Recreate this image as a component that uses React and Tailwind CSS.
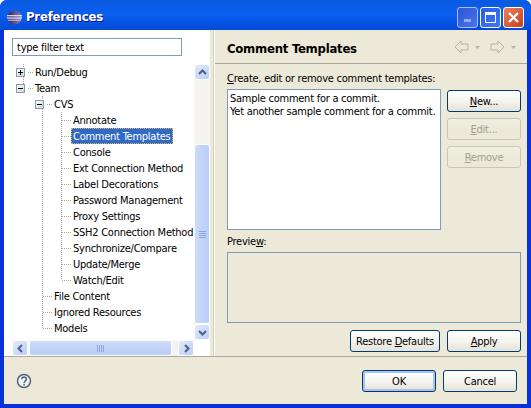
import React from "react";

function Btn({ children, disabled, def, className = "" }) {
  return (
    <button
      className={
        "h-[22px] whitespace-nowrap rounded-[3px] border text-[11px] leading-none tracking-[-0.25px] bg-gradient-to-b " +
        (disabled
          ? "border-[#c9c7ba] text-[#a1a192] from-[#f0eee2] via-[#ece9d8] to-[#ece9d8] "
          : "border-[#003c74] text-black from-white via-[#f5f4ee] to-[#e6e3d6] ") +
        (def ? "shadow-[inset_0_0_0_2px_#a9c2ee] " : "") +
        className
      }
    >
      {children}
    </button>
  );
}

function Row({ pl, children, selected, toggle }) {
  return (
    <div className="h-4 flex items-center relative whitespace-nowrap" style={{ paddingLeft: pl }}>
      {toggle && (
        <span
          className="absolute w-[9px] h-[9px] border border-[#7b9ebd] bg-gradient-to-br from-white to-[#d6d2c2] flex items-center justify-center"
          style={{ left: pl - 19 }}
        >
          <span className="block w-[5px] h-px bg-black" />
          {toggle === "+" && <span className="absolute block w-px h-[5px] bg-black" />}
        </span>
      )}
      {selected ? (
        <span className="-ml-[2px] px-px h-4 leading-[16px] bg-[#316ac5] text-white border border-dotted border-[#e6b450]">{children}</span>
      ) : (
        <span className="pt-[3px]">{children}</span>
      )}
    </div>
  );
}

function ScrollBtn({ d, className = "" }) {
  return (
    <div className={"rounded-[3px] border border-white bg-gradient-to-br from-[#e3ebfd] to-[#b9cdf7] flex items-center justify-center shrink-0 " + className}>
      <svg width="9" height="9" viewBox="0 0 9 9" fill="none">
        <path d={d} stroke="#4d6185" strokeWidth="2" />
      </svg>
    </div>
  );
}

function TreeLines() {
  const c = "#a9a793";
  const h = (x1, x2, y) => <line key={`h${x1}${y}`} x1={x1} x2={x2} y1={y + 0.5} y2={y + 0.5} stroke={c} strokeDasharray="1 1" />;
  const v = (x, y1, y2) => <line key={`v${x}${y1}`} x1={x + 0.5} x2={x + 0.5} y1={y1} y2={y2} stroke={c} strokeDasharray="1 1" />;
  const ys = [120, 136, 152, 168, 184, 200, 216, 232, 248, 264, 280];
  return (
    <svg className="absolute left-0 top-0 pointer-events-none" width="200" height="345" style={{ marginLeft: -4, marginTop: -30 }}>
      {v(23, 64, 68)}
      {v(23, 77, 84)}
      {h(28, 33, 72)}
      {h(28, 33, 88)}
      {v(42, 96, 100)}
      {h(47, 52, 104)}
      {v(42, 109, 328)}
      {v(61, 112, 280)}
      {ys.map((y) => h(62, 71, y))}
      {[296, 312, 328].map((y) => h(43, 52, y))}
    </svg>
  );
}

export default function App() {
  return (
    <div
      className="w-[531px] h-[408px] flex flex-col bg-[#0832d8] rounded-t-[7px] overflow-hidden text-[11px] text-black tracking-[-0.25px]"
      style={{ fontFamily: "'DejaVu Sans Condensed', 'DejaVu Sans', sans-serif" }}
    >
      <div className="h-[30px] shrink-0 flex items-center pl-[7px] pr-[7px] pt-[4px] gap-[4px] bg-gradient-to-b from-[#0a5ae0] via-[#0a5ff0] to-[#0449d6]">
        <svg width="15" height="15" viewBox="0 0 16 16" className="shrink-0">
          <defs>
            <linearGradient id="ec" x1="0" x2="1" y1="0" y2="0">
              <stop offset="0" stopColor="#2c2255" />
              <stop offset="1" stopColor="#8a7fc0" />
            </linearGradient>
          </defs>
          <circle cx="8" cy="8" r="7.500" fill="url(#ec)" />
          <rect x="0" y="5.500" width="16" height="1.200" fill="#f3eef8" />
          <rect x="0" y="8" width="16" height="1.200" fill="#f3eef8" />
          <rect x="1" y="10.400" width="14" height="1" fill="#d8d2ea" />
        </svg>
        <span className="flex-1 text-white font-bold text-[13px] tracking-[-0.2px] [text-shadow:1px_1px_#0f1089]">
          Preferences
        </span>
        <div className="flex gap-[2px]">
          <div className="w-[21px] h-[21px] rounded-[3px] border border-[#a8bdf0] bg-gradient-to-br from-[#2a56d8] to-[#4a74e8] flex items-end justify-center pb-[5px]">
            <span className="block w-[7px] h-[3px] bg-[#8fa8ee]" />
          </div>
          <div className="w-[21px] h-[21px] rounded-[3px] border border-white bg-gradient-to-br from-[#2a5ee8] to-[#3d78f0] flex items-center justify-center">
            <span className="block w-[11px] h-[11px] border border-white border-t-[3px]" />
          </div>
          <div className="w-[21px] h-[21px] rounded-[3px] border border-white bg-gradient-to-br from-[#e8835f] to-[#c63c14] flex items-center justify-center">
            <svg width="13" height="13" viewBox="0 0 13 13">
              <path d="M2 2l9 9M11 2l-9 9" stroke="white" strokeWidth="2.200" />
            </svg>
          </div>
        </div>
      </div>

      <div className="flex-1 mx-1 mb-1 bg-[#ece9d8] flex flex-col min-h-0">
        <div className="h-[327px] flex shrink-0 border-b border-[#aca899]">
          {/* Left pane */}
          <div className="w-[206px] bg-white relative flex flex-col shrink-0">
            <div className="pt-[8px] pl-[8px] pb-[8px]">
              <div className="w-[170px] h-[18px] border border-[#7f9db9] pl-[4px] pt-[2px] flex items-center bg-white">type filter text</div>
            </div>
            <TreeLines />
            <div className="flex h-[277px]">
              <div className="w-[190px]">
                <Row pl={31} toggle="+">Run/Debug</Row>
                <Row pl={31} toggle="-">Team</Row>
                <Row pl={50} toggle="-">CVS</Row>
                <Row pl={69}>Annotate</Row>
                <Row pl={69} selected>Comment Templates</Row>
                {["Console", "Ext Connection Method", "Label Decorations", "Password Management", "Proxy Settings", "SSH2 Connection Method", "Synchronize/Compare", "Update/Merge", "Watch/Edit"].map((t) => (
                  <Row key={t} pl={69}>{t}</Row>
                ))}
                <Row pl={50}>File Content</Row>
                <Row pl={50}>Ignored Resources</Row>
                <Row pl={50}>Models</Row>
              </div>
              <div className="w-[16px] h-full flex flex-col bg-[#f5f4ee]">
                <ScrollBtn d="M1 6l3.500-3.500L8 6" className="h-[16px]" />
                <div className="h-[64px]" />
                <div className="h-[180px] rounded-[3px] border border-white bg-gradient-to-r from-[#cddbfb] to-[#b9cdf7] flex items-center justify-center">
                  <div className="w-[7px] h-[7px] bg-[repeating-linear-gradient(180deg,#8ea6dc_0_1px,transparent_1px_2px)]" />
                </div>
                <ScrollBtn d="M1 3l3.500 3.500L8 3" className="h-[16px]" />
              </div>
            </div>
            <div className="h-[16px] ml-[8px] mr-[16px] flex bg-[#f5f4ee]">
              <ScrollBtn d="M6 1L2.500 4.500 6 8" className="w-[16px]" />
              <div className="w-[143px] ml-[1px] rounded-[3px] border border-white bg-gradient-to-b from-[#cddbfb] to-[#b9cdf7] flex items-center justify-center">
                <div className="w-[7px] h-[7px] bg-[repeating-linear-gradient(90deg,#8ea6dc_0_1px,transparent_1px_2px)]" />
              </div>
              <div className="flex-1" />
              <ScrollBtn d="M3 1l3.500 3.500L3 8" className="w-[16px]" />
            </div>
          </div>

          <div className="w-[4px] shrink-0 border-r border-[#d6d2c2]" />

          {/* Right pane */}
          <div className="flex-1 flex flex-col min-w-0 border-l border-white">
            <div className="h-[34px] flex items-center border-b border-[#aca899] pl-[12px] pr-[10px] shrink-0 pt-[4px]">
              <span className="flex-1 font-bold text-[13px]">Comment Templates</span>
              <svg width="63" height="14" viewBox="0 0 63 14" fill="none" className="-mt-[3px]">
                <path d="M1 7l6-6v3h7v6H7v3z" fill="#ece9d8" stroke="#b5b3a5" />
                <path d="M21 6h5l-2.500 3z" fill="#b5b3a5" />
                <path d="M50 7l-6-6v3h-7v6h7v3z" fill="#ece9d8" stroke="#b5b3a5" />
                <path d="M57 6h5l-2.500 3z" fill="#b5b3a5" />
              </svg>
            </div>
            <div className="pl-[12px] pr-[6px] pt-[7px] flex-1 flex flex-col">
              <div className="h-[15px] leading-[15px] whitespace-nowrap"><u>C</u>reate, edit or remove comment templates:</div>
              <div className="flex mt-[3px] gap-[6px]">
                <div className="w-[214px] h-[141px] bg-white border border-[#7f9db9] pl-[2px] pr-[3px] pt-[2px] leading-[13px] shrink-0 whitespace-nowrap">
                  <div>Sample comment for a commit.</div>
                  <div>Yet another sample comment for a commit.</div>
                </div>
                <div className="flex-1 flex flex-col pt-px gap-[6px]">
                  <Btn><u>N</u>ew...</Btn>
                  <Btn disabled><u>E</u>dit...</Btn>
                  <Btn disabled><u>R</u>emove</Btn>
                </div>
              </div>
              <div className="h-[15px] leading-[15px] mt-[4px]">Previe<u>w</u>:</div>
              <div className="h-[71px] mt-[3px] border border-[#7f9db9] bg-[#ece9d8]" />
              <div className="flex justify-end gap-[7px] mt-[7px]">
                <Btn className="w-[90px]">Restore <u>D</u>efaults</Btn>
                <Btn className="w-[74px]"><u>A</u>pply</Btn>
              </div>
            </div>
          </div>
        </div>

        <div className="flex-1 flex items-center pl-[12px] pr-[10px]">
          <svg width="16" height="16" viewBox="0 0 16 16" fill="none" className="shrink-0">
            <circle cx="8" cy="8" r="6.500" fill="#f4f4f4" stroke="#53657e" strokeWidth="1.500" />
            <path d="M5.800 6.300c0-3 4.600-3 4.600 0 0 1.900-2.300 1.700-2.300 3.600" stroke="#53657e" strokeWidth="1.500" />
            <rect x="7.300" y="10.800" width="1.600" height="1.600" fill="#53657e" />
          </svg>
          <div className="flex-1" />
          <div className="flex gap-[7px] pt-[1px]">
            <Btn def className="w-[74px]">OK</Btn>
            <Btn className="w-[74px]">Cancel</Btn>
          </div>
        </div>
      </div>
    </div>
  );
}
